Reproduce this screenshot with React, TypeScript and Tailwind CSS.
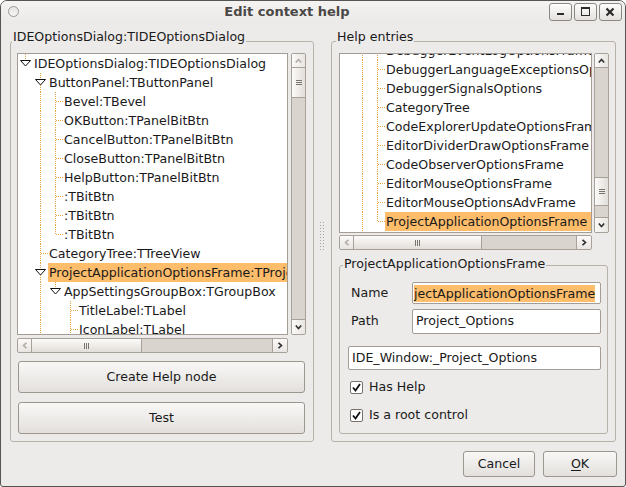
import React from 'react';

type G = 'n' | 'l' | 't' | 'c' | 'ef' | 'et';

const DOT = '#e6a447';

function Guide({ g }: { g: G }) {
  return (
    <svg width="15" height="19" className="block shrink-0" shapeRendering="crispEdges">
      {(g === 'l' || g === 't' || g === 'ef') && (
        <line x1="7.5" y1="0" x2="7.5" y2="19" stroke={DOT} strokeDasharray="1 1" />
      )}
      {(g === 'c' || g === 'et') && (
        <line x1="7.5" y1="0" x2="7.5" y2="9" stroke={DOT} strokeDasharray="1 1" />
      )}
      {(g === 't' || g === 'c') && (
        <line x1="8" y1="9.5" x2="15" y2="9.5" stroke={DOT} strokeDasharray="1 1" />
      )}
      {(g === 'ef' || g === 'et') && (
        <polygon
          points="2.5,6.5 12.5,6.5 7.5,12"
          fill="#ffffff"
          stroke="#111111"
          strokeLinejoin="miter"
          shapeRendering="geometricPrecision"
        />
      )}
    </svg>
  );
}

function Row({ guides, text, sel }: { guides: G[]; text: string; sel?: boolean }) {
  return (
    <div className="flex h-[19px] items-center whitespace-nowrap">
      {guides.map((g, i) => (
        <Guide key={i} g={g} />
      ))}
      <span className={sel ? 'flex-1 pl-[1px] h-[19px] leading-[19px] bg-[#fdbd6b]' : 'flex-1 pl-[1px] h-[19px] leading-[19px]'}>
        {text}
      </span>
    </div>
  );
}

function Chevron({ dir, dis }: { dir: 'u' | 'd' | 'l' | 'r'; dis?: boolean }) {
  const c = dis ? '#b2aca5' : '#2f2f2f';
  const pts =
    dir === 'u'
      ? '0.8,4.5 3.5,1.5 6.2,4.5'
      : dir === 'd'
      ? '0.8,1.5 3.5,4.5 6.2,1.5'
      : dir === 'l'
      ? '4.5,0.8 1.5,3.5 4.5,6.2'
      : '1.5,0.8 4.5,3.5 1.5,6.2';
  const w = dir === 'u' || dir === 'd' ? 7 : 6;
  const h = dir === 'u' || dir === 'd' ? 6 : 7;
  return (
    <svg width={w} height={h} className="block">
      <polyline points={pts} fill="none" stroke={c} strokeWidth="1.6" />
    </svg>
  );
}

function GripV() {
  return (
    <svg width="6" height="5" className="block" shapeRendering="crispEdges">
      <line x1="0" y1="0.5" x2="6" y2="0.5" stroke="#7a746d" />
      <line x1="0" y1="2.5" x2="6" y2="2.5" stroke="#7a746d" />
      <line x1="0" y1="4.5" x2="6" y2="4.5" stroke="#7a746d" />
    </svg>
  );
}

function GripH() {
  return (
    <svg width="5" height="6" className="block" shapeRendering="crispEdges">
      <line x1="0.5" y1="0" x2="0.5" y2="6" stroke="#7a746d" />
      <line x1="2.5" y1="0" x2="2.5" y2="6" stroke="#7a746d" />
      <line x1="4.5" y1="0" x2="4.5" y2="6" stroke="#7a746d" />
    </svg>
  );
}

function Check() {
  return (
    <div className="w-[13px] h-[13px] border border-[#78726b] rounded-[2px] bg-white flex items-center justify-center">
      <svg width="9" height="9" className="block">
        <polyline points="1,4.5 3.5,7.5 8,1" fill="none" stroke="#111111" strokeWidth="1.8" />
      </svg>
    </div>
  );
}

function Caption({ text, pos }: { text: string; pos: string }) {
  return <span className={'absolute leading-[15px] px-[1px] bg-[#edebe9] whitespace-nowrap ' + pos}>{text}</span>;
}

const btn =
  'border border-[#9c968f] rounded-[3px] bg-gradient-to-b from-[#f9f8f7] to-[#e3e0dc] flex items-center justify-center';

export default function App() {
  const leftRows: { g: G[]; t: string; s?: boolean }[] = [
    { g: ['et'], t: 'IDEOptionsDialog:TIDEOptionsDialog' },
    { g: ['n', 'ef'], t: 'ButtonPanel:TButtonPanel' },
    { g: ['n', 'l', 't'], t: 'Bevel:TBevel' },
    { g: ['n', 'l', 't'], t: 'OKButton:TPanelBitBtn' },
    { g: ['n', 'l', 't'], t: 'CancelButton:TPanelBitBtn' },
    { g: ['n', 'l', 't'], t: 'CloseButton:TPanelBitBtn' },
    { g: ['n', 'l', 't'], t: 'HelpButton:TPanelBitBtn' },
    { g: ['n', 'l', 't'], t: ':TBitBtn' },
    { g: ['n', 'l', 't'], t: ':TBitBtn' },
    { g: ['n', 'l', 'c'], t: ':TBitBtn' },
    { g: ['n', 't'], t: 'CategoryTree:TTreeView' },
    { g: ['n', 'ef'], t: 'ProjectApplicationOptionsFrame:TProjectApplicationOptionsFrame', s: true },
    { g: ['n', 'l', 'et'], t: 'AppSettingsGroupBox:TGroupBox' },
    { g: ['n', 'l', 'n', 't'], t: 'TitleLabel:TLabel' },
    { g: ['n', 'l', 'n', 't'], t: 'IconLabel:TLabel' },
  ];
  const rightRows: { t: string; s?: boolean; last?: boolean }[] = [
    { t: 'DebuggerEventLogOptionsFrame' },
    { t: 'DebuggerLanguageExceptionsOptions' },
    { t: 'DebuggerSignalsOptions' },
    { t: 'CategoryTree' },
    { t: 'CodeExplorerUpdateOptionsFrame' },
    { t: 'EditorDividerDrawOptionsFrame' },
    { t: 'CodeObserverOptionsFrame' },
    { t: 'EditorMouseOptionsFrame' },
    { t: 'EditorMouseOptionsAdvFrame' },
    { t: 'ProjectApplicationOptionsFrame', s: true, last: true },
  ];

  return (
    <div className="w-[626px] h-[487px] bg-[#edebe9] border border-[#575553] rounded-t-[7px] rounded-b-[3px] overflow-hidden flex flex-col font-['DejaVu_Sans',sans-serif] text-[12.6px] text-[#1a1a1a]">
      {/* title bar */}
      <div className="h-[24px] shrink-0 flex bg-gradient-to-b from-[#f4f3f2] to-[#ebe9e7]">
        <div className="w-[24px] pl-[7px] pt-[5px]">
          <div className="w-[11px] h-[11px] rounded-full border border-[#9b9893] bg-gradient-to-b from-[#e6e4e1] to-[#f7f6f5]" />
        </div>
        <div className="flex-1 text-center font-bold text-[13px] leading-[22px] text-[#4a4846]">Edit context help</div>
        <div className="flex gap-[2px] pt-[2px] pr-[3px]">
          <div className="w-[23px] h-[18px] border border-[#8b8884] rounded-[3px] bg-gradient-to-b from-[#fdfdfc] to-[#e4e1dd]">
            <svg width="21" height="16" className="block" shapeRendering="crispEdges">
              <rect x="7" y="9" width="7" height="2" fill="#2b2b2b" />
            </svg>
          </div>
          <div className="w-[23px] h-[18px] border border-[#8b8884] rounded-[3px] bg-gradient-to-b from-[#fdfdfc] to-[#e4e1dd]">
            <svg width="21" height="16" className="block" shapeRendering="crispEdges">
              <rect x="6.5" y="3.5" width="8" height="8" fill="none" stroke="#2b2b2b" />
              <rect x="6" y="3" width="9" height="2" fill="#2b2b2b" />
            </svg>
          </div>
          <div className="w-[23px] h-[18px] border border-[#8b8884] rounded-[3px] bg-gradient-to-b from-[#fdfdfc] to-[#e4e1dd]">
            <svg width="21" height="16" className="block">
              <line x1="6.5" y1="4.5" x2="13.5" y2="11.5" stroke="#2b2b2b" strokeWidth="2.2" />
              <line x1="13.5" y1="4.5" x2="6.5" y2="11.5" stroke="#2b2b2b" strokeWidth="2.2" />
            </svg>
          </div>
        </div>
      </div>

      {/* body */}
      <div className="flex pt-[16px] pl-[9px]">
        {/* left group */}
        <div className="relative w-[304px] h-[401px] border border-[#b7b1aa] rounded-[3px] pt-[11px] pl-[6px]">
          <Caption text="IDEOptionsDialog:TIDEOptionsDialog" pos="top-[-13px] left-[1px]" />
          <div className="flex gap-[3px]">
            <div className="w-[271px] h-[282px] border border-[#a39d96] bg-white overflow-hidden">
              {leftRows.map((r, i) => (
                <Row key={i} guides={r.g} text={r.t} sel={r.s} />
              ))}
            </div>
            <div className="w-[15px] h-[282px] border border-[#a7a19a] rounded-[2px] bg-[#d9d4ce] flex flex-col overflow-hidden">
              <div className="h-[14px] border-b border-[#a7a19a] bg-gradient-to-r from-[#fbfaf9] to-[#e8e5e1] flex items-center justify-center">
                <Chevron dir="u" dis />
              </div>
              <div className="h-[30px] border-b border-[#a7a19a] bg-gradient-to-r from-[#fcfbfa] to-[#e2ded9] flex items-center justify-center">
                <GripV />
              </div>
              <div className="flex-1" />
              <div className="h-[15px] border-t border-[#a7a19a] bg-gradient-to-r from-[#fbfaf9] to-[#e8e5e1] flex items-center justify-center">
                <Chevron dir="d" />
              </div>
            </div>
          </div>
          <div className="mt-[3px] w-[271px] h-[15px] border border-[#a7a19a] rounded-[2px] bg-[#d9d4ce] flex overflow-hidden">
            <div className="w-[14px] border-r border-[#a7a19a] bg-gradient-to-b from-[#fbfaf9] to-[#e8e5e1] flex items-center justify-center">
              <Chevron dir="l" dis />
            </div>
            <div className="w-[110px] border-r border-[#a7a19a] bg-gradient-to-b from-[#fcfbfa] to-[#e2ded9] flex items-center justify-center">
              <GripH />
            </div>
            <div className="flex-1" />
            <div className="w-[15px] border-l border-[#a7a19a] bg-gradient-to-b from-[#fbfaf9] to-[#e8e5e1] flex items-center justify-center">
              <Chevron dir="r" />
            </div>
          </div>
          <div className="w-[289px] pl-[1px]">
            <div className={'mt-[8px] w-[287px] h-[32px] ' + btn}>Create Help node</div>
            <div className={'mt-[9px] w-[287px] h-[32px] ' + btn}>Test</div>
          </div>
        </div>

        {/* splitter */}
        <div className="w-[17px] h-[401px] pt-[181px] pl-[6px]">
          <svg width="4" height="29" className="block" shapeRendering="crispEdges">
            {[0, 3, 6, 9, 12, 15, 18, 21, 24, 27].map((y) => (
              <React.Fragment key={y}>
                <rect x="0" y={y} width="1" height="1" fill="#a9a39c" />
                <rect x="3" y={y} width="1" height="1" fill="#a9a39c" />
              </React.Fragment>
            ))}
          </svg>
        </div>

        {/* right group */}
        <div className="relative w-[285px] h-[401px] border border-[#b7b1aa] rounded-[3px] pt-[11px] pl-[7px]">
          <Caption text="Help entries" pos="top-[-13px] left-[4px]" />
          <div className="flex gap-[2px]">
            <div className="w-[253px] h-[180px] border border-[#a39d96] bg-white overflow-hidden">
              <div className="-mt-[13px]">
                {rightRows.map((r, i) => (
                  <Row key={i} guides={['n', 'l', r.last ? 'c' : 't']} text={r.t} sel={r.s} />
                ))}
              </div>
            </div>
            <div className="w-[15px] h-[180px] border border-[#a7a19a] rounded-[2px] bg-[#d9d4ce] flex flex-col overflow-hidden">
              <div className="h-[14px] border-b border-[#a7a19a] bg-gradient-to-r from-[#fbfaf9] to-[#e8e5e1] flex items-center justify-center">
                <Chevron dir="u" />
              </div>
              <div className="h-[109px]" />
              <div className="h-[29px] border-y border-[#a7a19a] bg-gradient-to-r from-[#fcfbfa] to-[#e2ded9] flex items-center justify-center">
                <GripV />
              </div>
              <div className="flex-1" />
              <div className="h-[15px] border-t border-[#a7a19a] bg-gradient-to-r from-[#fbfaf9] to-[#e8e5e1] flex items-center justify-center">
                <Chevron dir="d" />
              </div>
            </div>
          </div>
          <div className="mt-[2px] w-[253px] h-[15px] border border-[#a7a19a] rounded-[2px] bg-[#d9d4ce] flex overflow-hidden">
            <div className="w-[14px] border-r border-[#a7a19a] bg-gradient-to-b from-[#fbfaf9] to-[#e8e5e1] flex items-center justify-center">
              <Chevron dir="l" dis />
            </div>
            <div className="w-[128px] border-r border-[#a7a19a] bg-gradient-to-b from-[#fcfbfa] to-[#e2ded9] flex items-center justify-center">
              <GripH />
            </div>
            <div className="flex-1" />
            <div className="w-[15px] border-l border-[#a7a19a] bg-gradient-to-b from-[#fbfaf9] to-[#e8e5e1] flex items-center justify-center">
              <Chevron dir="r" />
            </div>
          </div>

          {/* inner group */}
          <div className="relative mt-[15px] w-[269px] h-[169px] border border-[#b7b1aa] rounded-[3px] pt-[16px]">
            <Caption text="ProjectApplicationOptionsFrame" pos="top-[-10px] left-[3px]" />
            <div className="flex items-center pl-[11px] pr-[6px] h-[22px]">
              <div className="w-[61px]">Name</div>
              <div className="flex-1 h-[22px] border border-[#a39d96] rounded-[2px] bg-white flex items-center pl-[1px] overflow-hidden whitespace-nowrap">
                <span className="bg-[#fdbd6b] leading-[17px]">jectApplicationOptionsFrame</span>
              </div>
            </div>
            <div className="flex items-center pl-[11px] pr-[6px] h-[25px] mt-[5px]">
              <div className="w-[61px]">Path</div>
              <div className="flex-1 h-[25px] border border-[#a39d96] rounded-[2px] bg-white flex items-center pl-[3px] overflow-hidden whitespace-nowrap">
                Project_Options
              </div>
            </div>
            <div className="pl-[8px] pr-[6px] mt-[12px]">
              <div className="h-[24px] border border-[#a39d96] rounded-[2px] bg-white flex items-center pl-[3px] overflow-hidden whitespace-nowrap">
                IDE_Window:_Project_Options
              </div>
            </div>
            <div className="flex items-center h-[20px] mt-[7px] pl-[10px] gap-[6px]">
              <Check />
              <span>Has Help</span>
            </div>
            <div className="flex items-center h-[20px] mt-[8px] pl-[10px] gap-[6px]">
              <Check />
              <span>Is a root control</span>
            </div>
          </div>
        </div>
      </div>

      {/* bottom buttons */}
      <div className="flex justify-end gap-[8px] pr-[8px] mt-[9px]">
        <div className={'w-[72px] h-[26px] ' + btn}>Cancel</div>
        <div className={'w-[74px] h-[26px] ' + btn}>
          <span>
            <span className="underline underline-offset-2">O</span>K
          </span>
        </div>
      </div>
    </div>
  );
}
